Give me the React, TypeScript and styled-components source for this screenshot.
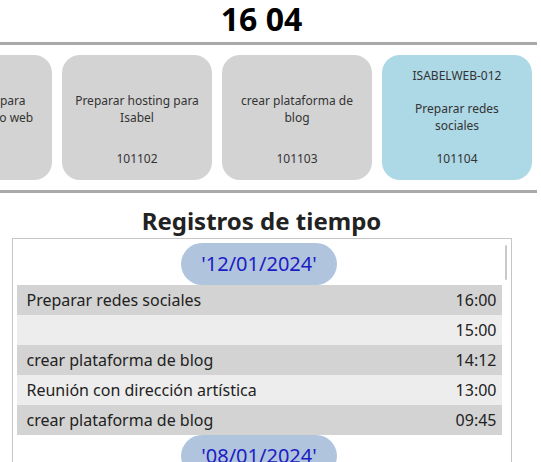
import styled, { createGlobalStyle } from "styled-components";

interface Task {
  id: number;
  code?: string;
  title: string;
  active?: boolean;
}

interface Entry {
  task: string;
  time: string;
}

interface Day {
  date: string;
  entries: Entry[];
}

const tasks: Task[] = [
  { id: 101101, title: "Crear textos para página del sitio web" },
  { id: 101102, title: "Preparar hosting para Isabel" },
  { id: 101103, title: "crear plataforma de blog" },
  { id: 101104, code: "ISABELWEB-012", title: "Preparar redes sociales", active: true },
];

const days: Day[] = [
  {
    date: "'12/01/2024'",
    entries: [
      { task: "Preparar redes sociales", time: "16:00" },
      { task: "", time: "15:00" },
      { task: "crear plataforma de blog", time: "14:12" },
      { task: "Reunión con dirección artística", time: "13:00" },
      { task: "crear plataforma de blog", time: "09:45" },
    ],
  },
  {
    date: "'08/01/2024'",
    entries: [
      { task: "Preparar hosting para Isabel", time: "17:30" },
      { task: "crear plataforma de blog", time: "11:00" },
    ],
  },
];

const App = () => {
  return (
    <>
      <GlobalStyle />
      <Clock>16 04</Clock>
      <TaskStrip>
        {tasks.map((t) => (
          <TaskCard key={t.id} active={t.active}>
            <div>{t.code}</div>
            <div>{t.title}</div>
            <div>{t.id}</div>
          </TaskCard>
        ))}
      </TaskStrip>
      <Section>
        <SectionTitle>Registros de tiempo</SectionTitle>
        <LogBox>
          {days.map((d) => (
            <div key={d.date}>
              <DatePill>{d.date}</DatePill>
              {d.entries.map((e, i) => (
                <LogRow key={i} odd={i % 2 === 0}>
                  <span>{e.task}</span>
                  <span>{e.time}</span>
                </LogRow>
              ))}
            </div>
          ))}
          <ScrollThumb />
        </LogBox>
      </Section>
    </>
  );
};

export default App;

const GlobalStyle = createGlobalStyle`
  body {
    margin: 0;
    background: #fff;
    font-family: "Noto Sans", "Open Sans", sans-serif;
    overflow: hidden;
  }
`;

const Clock = styled.h1`
  width: 523px;
  margin: 0 0 4px;
  font-size: 32px;
  line-height: 38px;
  font-weight: 700;
  text-align: center;
  color: #000;
`;

const TaskStrip = styled.div`
  width: 537px;
  display: flex;
  justify-content: flex-end;
  overflow: hidden;
  padding: 10px 0;
  border-top: 3px solid #a9a9a9;
  border-bottom: 3px solid #a9a9a9;
`;

const TaskCard = styled.div<{ active?: boolean }>`
  flex-shrink: 0;
  box-sizing: border-box;
  width: 150px;
  height: 125px;
  margin: 0 5px;
  padding: 12px 10px 13px;
  border-radius: 18px;
  background: ${(props) => (props.active ? "#add8e6" : "#d3d3d3")};
  color: #333;
  font-size: 12px;
  text-align: center;
  display: flex;
  flex-direction: column;
  justify-content: space-between;
`;

const Section = styled.div`
  width: 523px;
`;

const SectionTitle = styled.h2`
  margin: 11px 0 1px;
  font-size: 24px;
  line-height: 33px;
  font-weight: 700;
  text-align: center;
  color: #222;
`;

const LogBox = styled.div`
  position: relative;
  box-sizing: border-box;
  width: 500px;
  height: 260px;
  margin: 0 auto;
  padding: 4px 9px 0 4px;
  border: 1px solid #c6c6c6;
  overflow: hidden;
`;

const DatePill = styled.div`
  width: fit-content;
  margin: 0 auto;
  padding: 7px 20px;
  border-radius: 21px;
  background: #b0c4de;
  color: #1c1cc4;
  font-size: 20px;
  line-height: 28px;
`;

const LogRow = styled.div<{ odd?: boolean }>`
  height: 30px;
  display: flex;
  align-items: center;
  justify-content: space-between;
  padding: 0 5px 0 10px;
  background: ${(props) => (props.odd ? "#d3d3d3" : "#ededed")};
  color: #222;
  font-size: 16px;
`;

const ScrollThumb = styled.div`
  position: absolute;
  top: 6px;
  right: 4px;
  width: 2px;
  height: 35px;
  border-radius: 1px;
  background: #c8c8c8;
`;
